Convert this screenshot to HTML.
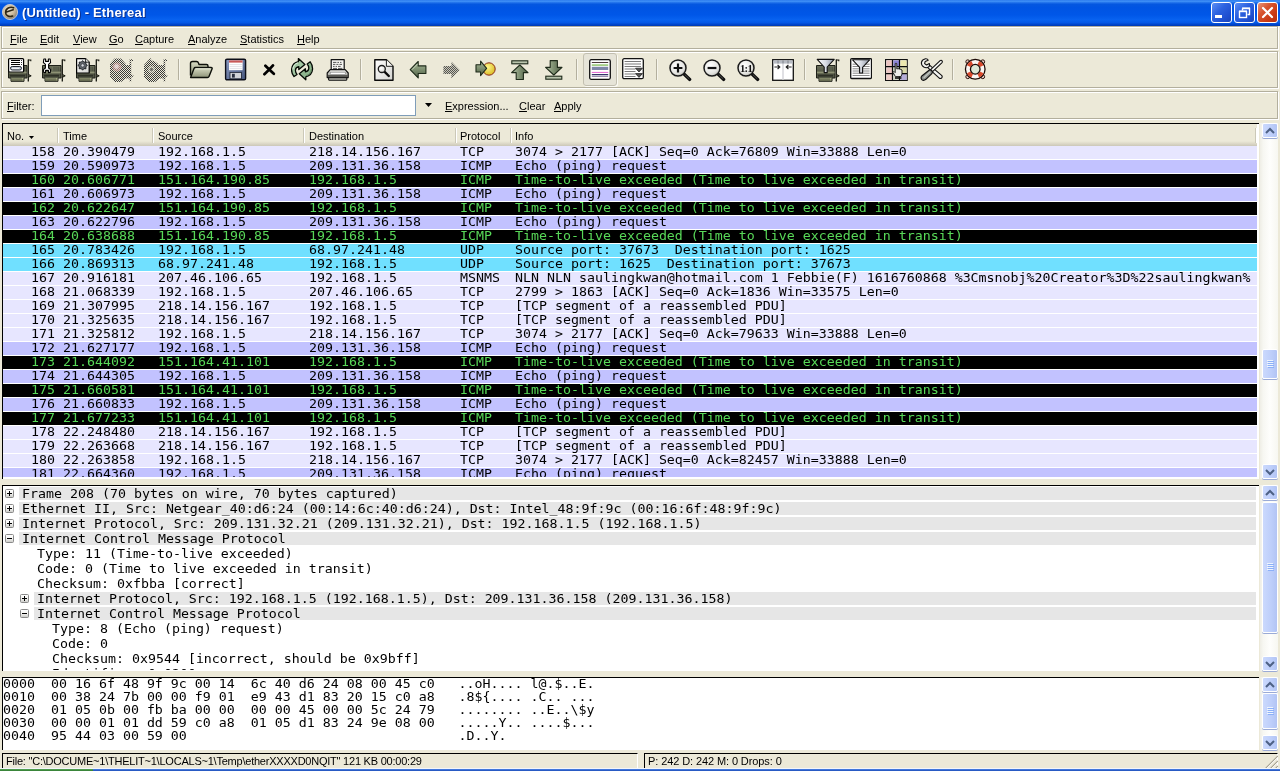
<!DOCTYPE html>
<html lang="en"><head><meta charset="utf-8"><title>(Untitled) - Ethereal</title>
<style>
*{box-sizing:border-box;margin:0;padding:0}
html,body{width:1280px;height:771px;overflow:hidden;background:#ece9d8}
body{position:relative;font:11px "Liberation Sans",sans-serif;color:#000;-webkit-font-smoothing:antialiased}
.abs,.m,.u,.box{position:absolute}
.u{white-space:pre;line-height:14px;height:14px}
.u u{text-decoration:underline}
.m{font-family:"DejaVu Sans Mono","Liberation Mono",monospace;font-size:11.4px;white-space:pre;transform-origin:0 0;transform:scaleX(1.1656);line-height:13px;height:13px;left:0;top:0}
.r{position:absolute;left:3px;width:1254px;height:13px;overflow:hidden}
.r .m{top:0}
.tcp{background:#e7e6ff}.icmp{background:#c2c2ff}.udp{background:#70e0ff}.ttl{background:#000;color:#58d858}
.panel{position:absolute;border:1px solid #b3af9d;box-shadow:1px 1px 0 #fff,inset 1px 1px 0 #fff}
</style></head>
<body>
<div id="win" style="position:absolute;left:0;top:0;width:1280px;height:771px;overflow:hidden;will-change:transform">
<div class="abs" id="titlebar" style="left:0;top:0;width:1280px;height:26px;background:linear-gradient(to bottom,#2f7eee 0%,#3c8df5 6%,#1a6be8 11%,#0457e0 17%,#0054e3 30%,#0057e8 58%,#0862f0 76%,#0558e6 87%,#0046cc 94%,#0038b0 100%)"></div>
<svg class="abs" style="left:1px;top:3px" width="18" height="18" viewBox="0 0 18 18"><defs><linearGradient id="gexp" x1="0" y1="0" x2="0" y2="1"><stop offset="0" stop-color="#fff"/><stop offset="0.5" stop-color="#f4f4f2"/><stop offset="1" stop-color="#c8c8c4"/></linearGradient><radialGradient id="ig" cx="40%" cy="35%" r="65%"><stop offset="0" stop-color="#efe6d4"/><stop offset="0.6" stop-color="#cdbb9c"/><stop offset="1" stop-color="#8c8478"/></radialGradient></defs><circle cx="9" cy="9" r="7.6" fill="url(#ig)" stroke="#c9cdd6" stroke-width="0.9"/><path d="M12.6 4.8 C9 3.4 4.6 5.4 4.6 9.4 C4.6 13 8.4 14.4 11.6 13 M5.4 9 L12.2 6.8" fill="none" stroke="#2e2614" stroke-width="1.6" stroke-linecap="round"/></svg>
<div class="abs" style="left:22px;top:5px;font:bold 13px 'Liberation Sans',sans-serif;letter-spacing:0.18px;color:#fff;text-shadow:1px 1px 0 #0a2f8f;white-space:pre;line-height:16px">(Untitled) - Ethereal</div>
<div class="abs" style="left:1211px;top:2px;width:21px;height:21px;border:1px solid #fff;border-radius:3px;background:linear-gradient(135deg,#5c8ff5 0%,#2c62e0 40%,#1f4fd0 75%,#1a44b8 100%)"></div><div class="abs" style="left:1215px;top:15px;width:7px;height:3px;background:#fff"></div>
<div class="abs" style="left:1234px;top:2px;width:21px;height:21px;border:1px solid #fff;border-radius:3px;background:linear-gradient(135deg,#5c8ff5 0%,#2c62e0 40%,#1f4fd0 75%,#1a44b8 100%)"></div><svg class="abs" style="left:1234px;top:2px" width="21" height="21" viewBox="0 0 21 21"><path d="M8.5 6.5 h7 v6 h-2 M8.5 6.5 v2" fill="none" stroke="#fff" stroke-width="1.4"/><rect x="5.5" y="9.5" width="7" height="6" fill="none" stroke="#fff" stroke-width="1.4"/><path d="M5 9.2 h8 M8 6.2 h8" stroke="#fff" stroke-width="1.2"/></svg>
<div class="abs" style="left:1257px;top:2px;width:21px;height:21px;border:1px solid #fff;border-radius:3px;background:linear-gradient(135deg,#e9967a 0%,#d8552f 35%,#c93a15 70%,#b5300f 100%)"></div><svg class="abs" style="left:1257px;top:2px" width="21" height="21" viewBox="0 0 21 21"><path d="M6 6 L15 15 M15 6 L6 15" stroke="#fff" stroke-width="2.2" stroke-linecap="round"/></svg>
<div class="panel" style="left:1px;top:26px;width:1277px;height:23px"></div>
<div class="u" style="left:10px;top:32px"><u>F</u>ile</div>
<div class="u" style="left:40px;top:32px"><u>E</u>dit</div>
<div class="u" style="left:73px;top:32px"><u>V</u>iew</div>
<div class="u" style="left:109px;top:32px"><u>G</u>o</div>
<div class="u" style="left:135px;top:32px"><u>C</u>apture</div>
<div class="u" style="left:188px;top:32px"><u>A</u>nalyze</div>
<div class="u" style="left:240px;top:32px"><u>S</u>tatistics</div>
<div class="u" style="left:297px;top:32px"><u>H</u>elp</div>
<div class="panel" style="left:1px;top:51px;width:1277px;height:37px"></div>
<svg width="0" height="0" style="position:absolute"><defs>
<pattern id="stip" width="2" height="2" patternUnits="userSpaceOnUse"><rect x="0" y="0" width="1" height="1" fill="#3a3a38"/><rect x="1" y="1" width="1" height="1" fill="#3a3a38"/></pattern>
<linearGradient id="gboard" x1="0" y1="0" x2="0" y2="1"><stop offset="0" stop-color="#6c705c"/><stop offset="0.55" stop-color="#4c5040"/><stop offset="1" stop-color="#5f6350"/></linearGradient>
<linearGradient id="gconn" x1="0" y1="0" x2="0" y2="1"><stop offset="0" stop-color="#b0b48c"/><stop offset="1" stop-color="#6f7358"/></linearGradient>
<linearGradient id="garrow" x1="0" y1="0" x2="0" y2="1"><stop offset="0" stop-color="#a9b89a"/><stop offset="0.5" stop-color="#7d8f70"/><stop offset="1" stop-color="#4d5c44"/></linearGradient>
<linearGradient id="garrowh" x1="0" y1="0" x2="1" y2="0"><stop offset="0" stop-color="#b4c2a6"/><stop offset="0.5" stop-color="#7d8f70"/><stop offset="1" stop-color="#4d5c44"/></linearGradient>
<linearGradient id="gfolder" x1="0" y1="0" x2="0" y2="1"><stop offset="0" stop-color="#d9dcc4"/><stop offset="1" stop-color="#8e9378"/></linearGradient>
<linearGradient id="gfloppy" x1="0" y1="0" x2="1" y2="1"><stop offset="0" stop-color="#8c9cc4"/><stop offset="1" stop-color="#46567c"/></linearGradient>
<radialGradient id="glens" cx="40%" cy="35%" r="70%"><stop offset="0" stop-color="#ffffff"/><stop offset="0.7" stop-color="#e4e4e0"/><stop offset="1" stop-color="#b8b8b2"/></radialGradient>
<linearGradient id="gfunnel" x1="0" y1="0" x2="1" y2="0"><stop offset="0" stop-color="#ffffff"/><stop offset="0.5" stop-color="#d8dce4"/><stop offset="1" stop-color="#8c94a4"/></linearGradient>
<radialGradient id="gyel" cx="40%" cy="35%" r="70%"><stop offset="0" stop-color="#fff68a"/><stop offset="1" stop-color="#d8b820"/></radialGradient>
<linearGradient id="gdoc" x1="0" y1="0" x2="1" y2="1"><stop offset="0" stop-color="#ffffff"/><stop offset="1" stop-color="#d4d4d0"/></linearGradient>
<linearGradient id="gprn" x1="0" y1="0" x2="0" y2="1"><stop offset="0" stop-color="#f2f2ee"/><stop offset="1" stop-color="#8c8c86"/></linearGradient>
<g id="nic">
 <path d="M0.5 7.5 H19 V20 H16 V23.3 H3 V20 H0.5 Z" fill="url(#gboard)" stroke="#1e2018" stroke-width="1"/>
 <rect x="1" y="13.6" width="17.6" height="1.8" fill="#8d9174"/>
 <rect x="3.5" y="20" width="12" height="3" fill="url(#gconn)"/>
 <path d="M5 20 V23 M7 20 V23 M9 20 V23 M11 20 V23 M13 20 V23" stroke="#4a4e3a" stroke-width="0.8"/>
 <rect x="2" y="16.8" width="15" height="1.8" fill="#2e3026"/>
 <rect x="10.5" y="9" width="6" height="4" fill="#7d826a"/>
 <path d="M12 9 V13 M14 9 V13 M16 9 V13" stroke="#30342a" stroke-width="0.9"/>
 <path d="M20.3 1.5 V23.5" stroke="#16170f" stroke-width="1.3"/>
 <path d="M20 2 H22.8 V3.2" stroke="#16170f" stroke-width="1.1" fill="none"/>
 <path d="M20.5 16.5 L23.2 17.8 L21 19" stroke="#16170f" stroke-width="1" fill="#6c705c"/>
</g>
</defs></svg>
<svg class="abs" style="left:8px;top:58px" width="24" height="24" viewBox="0 0 24 24"><use href="#nic"/><rect x="0.6" y="0.6" width="15" height="13.4" fill="#fff" stroke="#000" stroke-width="1.2" rx="1"/><g shape-rendering="crispEdges"><rect x="3" y="2" width="9" height="1" fill="#000"/><rect x="3" y="4" width="9" height="1" fill="#000"/><rect x="3" y="6" width="9" height="1" fill="#000"/><rect x="13" y="2" width="1" height="1" fill="#333"/><rect x="13" y="4" width="1" height="1" fill="#333"/><rect x="13" y="6" width="1" height="1" fill="#333"/></g><rect x="2.5" y="8.5" width="11" height="3.5" rx="1.7" fill="#c4ccd8" stroke="#1c222c" stroke-width="1"/><path d="M4 10.4 H11" stroke="#fff" stroke-width="0.8"/></svg>
<svg class="abs" style="left:42px;top:58px" width="24" height="24" viewBox="0 0 24 24"><use href="#nic"/><path d="M1.8 1 L3.6 1 L3.6 3.4 L6.4 3.4 L6.4 1 L8.2 1 L8.6 4.6 L6.6 6.4 L6.6 10 L8.6 11.6 L8.2 14.6 L6.4 14.6 L6.4 12.4 L3.6 12.4 L3.6 14.6 L1.8 14.6 L1.4 11.6 L3.4 10 L3.4 6.4 L1.4 4.6 Z" fill="#fff" stroke="#000" stroke-width="1.1" stroke-linejoin="round"/></svg>
<svg class="abs" style="left:76px;top:58px" width="24" height="24" viewBox="0 0 24 24"><use href="#nic"/><path d="M0.6 0.6 H9.6 L13.2 4.2 V15 H0.6 Z" fill="url(#gdoc)" stroke="#000" stroke-width="1.2" stroke-linejoin="round"/><path d="M9.6 0.6 V4.2 H13.2" fill="#e8e8e4" stroke="#000" stroke-width="0.8"/><polygon points="11.40 7.40 9.83 8.74 9.99 10.79 7.94 10.63 6.60 12.20 5.26 10.63 3.21 10.79 3.37 8.74 1.80 7.40 3.37 6.06 3.21 4.01 5.26 4.17 6.60 2.60 7.94 4.17 9.99 4.01 9.83 6.06" fill="#5f636a" stroke="#1a1c20" stroke-width="0.9"/><circle cx="6.6" cy="7.4" r="1.6" fill="#d9dce2" stroke="#2a2c30" stroke-width="0.6"/></svg>
<svg class="abs" style="left:110px;top:58px" width="24" height="24" viewBox="0 0 24 24"><g fill="url(#stip)"><path d="M4.6 0.6 H11 L15.8 6 V7 H19.6 V1.2 H23 V3 H21.2 V16 L24 18 L21.2 19.6 V23.4 H19.6 V20.6 H15.8 L11 24 H4.6 L0 19 V5.6 Z"/></g><circle cx="7" cy="9" r="4.5" fill="#e8b0b0" opacity="0.5"/><circle cx="6.5" cy="8.5" r="2.2" fill="#fff" opacity="0.5"/></svg>
<svg class="abs" style="left:144px;top:58px" width="24" height="24" viewBox="0 0 24 24"><g fill="url(#stip)"><path d="M6.4 0 L7.6 2.6 L11 3.4 L14.2 6 V7 H19.6 V1.2 H23 V3 H21.2 V16 L24 18 L21.2 19.6 V23.4 H19.6 V20.6 H15.8 L11 24 H4.6 L0 19 V7 Z"/></g><circle cx="7.5" cy="11.5" r="3.4" fill="#ece9d8" opacity="0.45"/><circle cx="7.5" cy="11.5" r="1.4" fill="#3a3a38" opacity="0.6"/></svg>
<div class="abs" style="left:178px;top:59px;width:1px;height:21px;background:#b4b09e"></div><div class="abs" style="left:179px;top:59px;width:1px;height:21px;background:#f6f5ec"></div>
<svg class="abs" style="left:189px;top:58px" width="24" height="24" viewBox="0 0 24 24"><path d="M1.5 17.5 V5.5 Q1.5 3.5 3.5 3.5 H7.5 Q9 3.5 9.5 5 L10 6.5 H17.5 Q19 6.5 19 8 V9.5" fill="url(#gfolder)" stroke="#0e100a" stroke-width="1.4" stroke-linejoin="round"/><path d="M1.6 19.5 L5 10.5 Q5.4 9.5 6.5 9.5 H22 Q23.6 9.5 23 11 L20 18.5 Q19.6 19.5 18.5 19.5 Z" fill="url(#gfolder)" stroke="#0e100a" stroke-width="1.4" stroke-linejoin="round"/><path d="M6.5 10.8 H21.5" stroke="#f0f2e0" stroke-width="0.9"/></svg>
<svg class="abs" style="left:224px;top:58px" width="24" height="24" viewBox="0 0 24 24"><rect x="1.6" y="1.2" width="20" height="20.6" rx="1.4" fill="url(#gfloppy)" stroke="#0c0e18" stroke-width="1.4"/><rect x="5" y="2.4" width="13.6" height="9.8" fill="#fff"/><rect x="5" y="2.4" width="13.6" height="2.2" fill="#c85858"/><path d="M5.5 6.6 H18 M5.5 8.6 H18 M5.5 10.6 H18" stroke="#d4d4dc" stroke-width="0.7"/><rect x="6" y="14.4" width="11.4" height="6.4" fill="#d2d4d8" stroke="#1a2030" stroke-width="0.8"/><rect x="8" y="15.8" width="2.8" height="3.8" fill="#2a3040"/></svg>
<svg class="abs" style="left:263px;top:64px" width="13" height="13" viewBox="0 0 13 13"><path d="M2.4 1.8 Q6 5.4 10.8 9.8 M10 1.4 Q6.4 5.6 1.4 10.2" fill="none" stroke="#000" stroke-width="2.7" stroke-linecap="round"/></svg>
<svg class="abs" style="left:291px;top:58px" width="24" height="24" viewBox="0 0 24 24"><path d="M7.4 0.6 L13.9 6.6 L7.8 11.6 L7.8 8.6 Q4.6 9 4.4 12.2 Q4.4 14.6 6 16.4 L3 18.6 Q0.4 15.4 0.6 11.4 Q1.2 4.8 7.4 3.6 Z" fill="#a2c6a2" stroke="#050a05" stroke-width="1.3" stroke-linejoin="round"/><path d="M7 4.8 Q2.4 6 1.8 11.4" stroke="#dcefdc" stroke-width="1" fill="none"/><g transform="rotate(180 11.1 11.2)"><path d="M7.4 0.6 L13.9 6.6 L7.8 11.6 L7.8 8.6 Q4.6 9 4.4 12.2 Q4.4 14.6 6 16.4 L3 18.6 Q0.4 15.4 0.6 11.4 Q1.2 4.8 7.4 3.6 Z" fill="#8fb68f" stroke="#050a05" stroke-width="1.3" stroke-linejoin="round"/><path d="M7 4.8 Q2.4 6 1.8 11.4" stroke="#5c845c" stroke-width="1" fill="none"/></g></svg>
<svg class="abs" style="left:326px;top:58px" width="24" height="24" viewBox="0 0 24 24"><path d="M5.2 12 V1.6 H18.2 V12" fill="#f6f6f2" stroke="#111" stroke-width="1.2" stroke-linejoin="round"/><path d="M7 4.4 H10.4 M11.4 4.4 H13 M14 4.4 H15.4 M7 6.4 H9.4 M10.4 6.4 H12.4 M13.4 6.4 H16 M7 8.4 H8.6 M9.6 8.4 H11 M12 8.4 H14.6 M7 10.4 H11 M12 10.4 H16.4" stroke="#555" stroke-width="1"/><path d="M1.2 19.6 V15 L4.2 11.6 H19.2 L22.2 15 V19.6 Z" fill="url(#gprn)" stroke="#111" stroke-width="1.2" stroke-linejoin="round"/><rect x="4.2" y="14.2" width="15" height="2.2" fill="#fff" stroke="#777" stroke-width="0.5"/><path d="M1.8 18 H21.6" stroke="#4a4a44" stroke-width="1.6"/><path d="M2.6 19.8 H20.8 V21.6 Q20.8 22.2 20.2 22.2 H3.2 Q2.6 22.2 2.6 21.6 Z" fill="#b4b4ac" stroke="#111" stroke-width="1.1"/></svg>
<div class="abs" style="left:360px;top:59px;width:1px;height:21px;background:#b4b09e"></div><div class="abs" style="left:361px;top:59px;width:1px;height:21px;background:#f6f5ec"></div>
<svg class="abs" style="left:373px;top:58px" width="24" height="24" viewBox="0 0 24 24"><path d="M1.8 1.7 H13.4 L20 8.3 V22.3 H1.8 Z" fill="url(#gdoc)" stroke="#0a0a0a" stroke-width="1.4" stroke-linejoin="round"/><path d="M13.4 1.7 V8.3 H20" fill="#f6f6f2" stroke="#0a0a0a" stroke-width="0.9" stroke-linejoin="round"/><path d="M11.4 13.6 L15.8 18" stroke="#0a0a0a" stroke-width="2.4" stroke-linecap="round"/><circle cx="8.8" cy="11" r="3.5" fill="url(#glens)" stroke="#1a1a1a" stroke-width="1.3"/></svg>
<svg class="abs" style="left:409px;top:60px" width="18" height="19" viewBox="0 0 18 19"><g transform="translate(0.4,0.7)"><path d="M0.8 9 L8.8 0.8 V5.2 H16.5 V12.8 H8.8 V17.2 Z" fill="url(#garrow)" stroke="#1e2a1a" stroke-width="1.1" stroke-linejoin="round"/><path d="M8 3.4 L2.6 9" stroke="#d8e4cc" stroke-width="0.8"/></g></svg>
<svg class="abs" style="left:443px;top:61px" width="18" height="18" viewBox="0 0 18 18"><path d="M16.5 9 L8.5 0.8 V5 H0.5 V13 H8.5 V17.2 Z" fill="url(#stip)"/><path d="M16.5 9 L8.5 0.8 V5 H0.5 V13 H8.5 V17.2 Z" fill="#8c8c84" opacity="0.35"/></svg>
<svg class="abs" style="left:474px;top:60px" width="22" height="18" viewBox="0 0 22 18"><circle cx="15" cy="9" r="6.2" fill="url(#gyel)" stroke="#8a2a1a" stroke-width="1"/><path d="M12.6 8.4 L6.6 1.2 V4.8 H2 V12 H6.6 V15.6 Z" fill="url(#garrow)" stroke="#1e2a1a" stroke-width="1.1" stroke-linejoin="round"/></svg>
<svg class="abs" style="left:511px;top:60px" width="18" height="20" viewBox="0 0 18 20"><rect x="0.8" y="0.8" width="16" height="3" fill="#b9c4ac" stroke="#1e2a1a" stroke-width="1.1"/><path d="M8.8 5 L17 12.6 H12.4 V19.5 H5.2 V12.6 H0.6 Z" fill="url(#garrowh)" stroke="#1e2a1a" stroke-width="1.1" stroke-linejoin="round"/></svg>
<svg class="abs" style="left:545px;top:60px" width="18" height="20" viewBox="0 0 18 20"><rect x="0.8" y="16.2" width="16" height="3" fill="#b9c4ac" stroke="#1e2a1a" stroke-width="1.1"/><path d="M8.8 15 L17 7.4 H12.4 V0.6 H5.2 V7.4 H0.6 Z" fill="url(#garrowh)" stroke="#1e2a1a" stroke-width="1.1" stroke-linejoin="round"/></svg>
<div class="abs" style="left:576px;top:59px;width:1px;height:21px;background:#b4b09e"></div><div class="abs" style="left:577px;top:59px;width:1px;height:21px;background:#f6f5ec"></div>
<div class="abs" style="left:583px;top:53px;width:34px;height:33px;background:#e6e4d8;border:1px solid #c2bfb0;border-radius:3px;box-shadow:1px 1px 0 #fbfaf4"></div>
<svg class="abs" style="left:589px;top:59px" width="22" height="21" viewBox="0 0 22 21"><rect x="0.7" y="0.7" width="20.6" height="19.6" rx="1.5" fill="#fff" stroke="#111" stroke-width="1.3"/><rect x="2.8" y="3.0" width="16.4" height="1.0" fill="#4a3a3a"/><rect x="2.8" y="5.2" width="16.4" height="1.8" fill="#a4cf86"/><rect x="2.8" y="7.8" width="16.4" height="3.2" fill="#7f88a8"/><rect x="2.8" y="12.9" width="16.4" height="1.1" fill="#e470d6"/><rect x="2.8" y="15.0" width="16.4" height="1.3" fill="#34346a"/><rect x="2.8" y="17.0" width="16.4" height="1.0" fill="#9a8cae"/></svg>
<svg class="abs" style="left:622px;top:58px" width="22" height="22" viewBox="0 0 22 22"><rect x="0.7" y="0.7" width="20.6" height="20" rx="1.5" fill="#fff" stroke="#111" stroke-width="1.3"/><path d="M2.6 3.5 H19.0" stroke="#7a7a7a" stroke-width="1"/><path d="M2.6 6.0 H19.0" stroke="#7a7a7a" stroke-width="1"/><path d="M2.6 8.5 H19.0" stroke="#7a7a7a" stroke-width="1"/><path d="M2.6 11.0 H13.5" stroke="#7a7a7a" stroke-width="1"/><path d="M2.6 13.5 H13.5" stroke="#7a7a7a" stroke-width="1"/><path d="M2.6 16.0 H13.5" stroke="#7a7a7a" stroke-width="1"/><path d="M2.6 18.5 H13.5" stroke="#7a7a7a" stroke-width="1"/><path d="M13.5 10.2 H20.4 L17 14 Z" fill="#555" stroke="#111" stroke-width="0.7"/><path d="M13.5 15.6 H20.4 L17 19.4 Z" fill="#555" stroke="#111" stroke-width="0.7"/></svg>
<div class="abs" style="left:656px;top:59px;width:1px;height:21px;background:#b4b09e"></div><div class="abs" style="left:657px;top:59px;width:1px;height:21px;background:#f6f5ec"></div>
<svg class="abs" style="left:669px;top:59px" width="23" height="23" viewBox="0 0 23 23"><path d="M14.6 14.6 L20.6 20.4" stroke="#0c0c0c" stroke-width="3.4" stroke-linecap="round"/><path d="M16 15.8 L20 19.6" stroke="#5a5a56" stroke-width="0.9" stroke-linecap="round"/><circle cx="9" cy="9" r="8" fill="url(#glens)" stroke="#1a1a1a" stroke-width="1.5"/><path d="M4.6 9 H13.4 M9 4.6 V13.4" stroke="#111" stroke-width="2.2"/></svg>
<svg class="abs" style="left:703px;top:59px" width="23" height="23" viewBox="0 0 23 23"><path d="M14.6 14.6 L20.6 20.4" stroke="#0c0c0c" stroke-width="3.4" stroke-linecap="round"/><path d="M16 15.8 L20 19.6" stroke="#5a5a56" stroke-width="0.9" stroke-linecap="round"/><circle cx="9" cy="9" r="8" fill="url(#glens)" stroke="#1a1a1a" stroke-width="1.5"/><path d="M4.6 9 H13.4" stroke="#111" stroke-width="2.2"/></svg>
<svg class="abs" style="left:737px;top:59px" width="23" height="23" viewBox="0 0 23 23"><path d="M14.6 14.6 L20.6 20.4" stroke="#0c0c0c" stroke-width="3.4" stroke-linecap="round"/><path d="M16 15.8 L20 19.6" stroke="#5a5a56" stroke-width="0.9" stroke-linecap="round"/><circle cx="9" cy="9" r="8" fill="url(#glens)" stroke="#1a1a1a" stroke-width="1.5"/><text x="9" y="12.6" text-anchor="middle" font-family="Liberation Serif, serif" font-weight="bold" font-size="10.5" letter-spacing="-0.7" fill="#111">1:1</text></svg>
<svg class="abs" style="left:772px;top:59px" width="22" height="22" viewBox="0 0 22 22"><rect x="0.7" y="0.7" width="20.6" height="20.6" fill="#fff" stroke="#111" stroke-width="1.3"/><rect x="1.4" y="1.4" width="19.2" height="3.2" fill="#b8bcc4"/><path d="M6 1.4 V4.6 M11 1.4 V4.6 M16 1.4 V4.6" stroke="#70747c" stroke-width="0.8"/><path d="M11 5 V20.5" stroke="#e0e0e4" stroke-width="2"/><path d="M2.4 8 H7.6 M5.6 6 L7.8 8 L5.6 10" stroke="#222" stroke-width="1.1" fill="none"/><path d="M19.6 8 H14.4 M16.4 6 L14.2 8 L16.4 10" stroke="#222" stroke-width="1.1" fill="none"/></svg>
<div class="abs" style="left:804px;top:59px;width:1px;height:21px;background:#b4b09e"></div><div class="abs" style="left:805px;top:59px;width:1px;height:21px;background:#f6f5ec"></div>
<svg class="abs" style="left:816px;top:58px" width="24" height="24" viewBox="0 0 24 24"><use href="#nic"/><path d="M1.2 1.4 H18.2 L11.2 9 V14.6 H8.2 V9 Z" fill="url(#gfunnel)" stroke="#111" stroke-width="1.1" stroke-linejoin="round"/></svg>
<svg class="abs" style="left:850px;top:58px" width="22" height="22" viewBox="0 0 22 22"><rect x="0.7" y="0.7" width="20.8" height="19.8" rx="1" fill="#fff" stroke="#111" stroke-width="1.3"/><path d="M2.6 6.2 H19.6" stroke="#7c7c7c" stroke-width="0.9"/><path d="M2.6 8.5 H19.6" stroke="#7c7c7c" stroke-width="0.9"/><path d="M2.6 10.8 H19.6" stroke="#7c7c7c" stroke-width="0.9"/><path d="M2.6 13.0 H19.6" stroke="#7c7c7c" stroke-width="0.9"/><path d="M2.6 15.2 H19.6" stroke="#7c7c7c" stroke-width="0.9"/><path d="M2.6 17.5 H19.6" stroke="#7c7c7c" stroke-width="0.9"/><path d="M2.6 1.8 H19.6 L12.6 9.4 V15 H9.6 V9.4 Z" fill="url(#gfunnel)" stroke="#111" stroke-width="1.1" stroke-linejoin="round"/></svg>
<svg class="abs" style="left:885px;top:59px" width="23" height="22" viewBox="0 0 23 22"><rect x="0.6" y="0.6" width="21.6" height="21" fill="#fff" stroke="#111" stroke-width="1.2"/><rect x="1.4" y="1.4" width="6.2" height="6" fill="#ecc4c0"/><rect x="8.4" y="1.4" width="6.2" height="6" fill="#8c84d8"/><rect x="15.4" y="1.4" width="6.2" height="6" fill="#ece8b0"/><rect x="1.4" y="8.2" width="6.2" height="6" fill="#ecc8c4"/><rect x="8.4" y="8.2" width="6.2" height="6" fill="#c8d8c0"/><rect x="15.4" y="8.2" width="6.2" height="6" fill="#d8d8a8"/><rect x="1.4" y="15.0" width="6.2" height="6" fill="#eeccc6"/><rect x="8.4" y="15.0" width="6.2" height="6" fill="#d4d8c8"/><rect x="15.4" y="15.0" width="6.2" height="6" fill="#b4acd8"/><path d="M7.5 1 V21.2 M14.5 1 V21.2 M1 7.5 H22 M1 14.5 H22" stroke="#0a0a0a" stroke-width="1.25"/><path d="M10.2 4.6 Q11 3.6 11.8 4.6 V10 L13 9.6 L14.4 10 L15.8 10.4 L17 11 V15 L16 17.6 H10.4 L8 13.4 Q8.2 12.2 9.4 12.8 L10.2 13.6 Z" fill="#ecece8" stroke="#111" stroke-width="0.9" stroke-linejoin="round"/><rect x="10" y="18.2" width="6.4" height="1.6" fill="#111"/></svg>
<svg class="abs" style="left:920px;top:58px" width="23" height="24" viewBox="0 0 23 24"><path d="M8.6 6.4 L21.6 17.4 Q22.8 18.8 21.6 20 Q20.2 21 19 19.8 L6.4 8.4 Z" fill="#f4f4f0" stroke="#111" stroke-width="1.1" stroke-linejoin="round"/><path d="M5.4 0.8 Q7.6 0.6 8.2 2.2 L5.2 3.4 L4.6 5.6 L6.6 7 L9.4 5.6 Q10.2 7.6 8.6 9 Q6.4 10.4 3.8 9 Q1.2 7.4 1.4 4.6 Q1.8 1.8 5.4 0.8 Z" fill="#f4f4f0" stroke="#111" stroke-width="1.1" stroke-linejoin="round"/><path d="M20.4 2.4 Q21.6 2 22.2 3 Q22.6 4 21.8 4.8 L12.6 13.6 L10.6 11.6 Z" fill="#f4f4f0" stroke="#111" stroke-width="1.1" stroke-linejoin="round"/><path d="M9.4 12 Q11.4 11.6 12.2 13.4 Q12.6 14.8 11.6 15.8 L5.6 21.6 Q3.6 23 1.8 21.6 Q0.4 19.8 1.8 18 Z" fill="#8e928e" stroke="#111" stroke-width="1.2" stroke-linejoin="round"/><path d="M4 19.6 L9.6 14.2" stroke="#c4c8c4" stroke-width="1.2" stroke-linecap="round"/></svg>
<div class="abs" style="left:952px;top:59px;width:1px;height:21px;background:#b4b09e"></div><div class="abs" style="left:953px;top:59px;width:1px;height:21px;background:#f6f5ec"></div>
<svg class="abs" style="left:964px;top:58px" width="23" height="23" viewBox="0 0 23 23"><circle cx="18.75" cy="18.75" r="1.9" fill="#f0d8d0" stroke="#2a0e08" stroke-width="1"/><circle cx="3.75" cy="18.75" r="1.9" fill="#f0d8d0" stroke="#2a0e08" stroke-width="1"/><circle cx="3.75" cy="3.75" r="1.9" fill="#f0d8d0" stroke="#2a0e08" stroke-width="1"/><circle cx="18.75" cy="3.75" r="1.9" fill="#f0d8d0" stroke="#2a0e08" stroke-width="1"/><circle cx="11.25" cy="11.25" r="9.8" fill="#fbf6f2" stroke="#1c0a06" stroke-width="1.3"/><path d="M19.59 15.14 A9.2 9.2 0 0 1 15.14 19.59 L13.45 15.96 A5.2 5.2 0 0 0 15.96 13.45 Z" fill="#d9492c"/><path d="M7.36 19.59 A9.2 9.2 0 0 1 2.91 15.14 L6.54 13.45 A5.2 5.2 0 0 0 9.05 15.96 Z" fill="#d9492c"/><path d="M2.91 7.36 A9.2 9.2 0 0 1 7.36 2.91 L9.05 6.54 A5.2 5.2 0 0 0 6.54 9.05 Z" fill="#d9492c"/><path d="M15.14 2.91 A9.2 9.2 0 0 1 19.59 7.36 L15.96 9.05 A5.2 5.2 0 0 0 13.45 6.54 Z" fill="#d9492c"/><circle cx="11.25" cy="11.25" r="4.8" fill="#dde8d6" stroke="#1c0a06" stroke-width="1.3"/></svg>
<div class="panel" style="left:1px;top:91px;width:1277px;height:28px"></div>
<div class="u" style="left:7px;top:99px"><u>F</u>ilter:</div>
<div class="abs" style="left:41px;top:95px;width:375px;height:21px;background:#fff;border:1px solid #7f9db9"></div>
<svg class="abs" style="left:425px;top:103px" width="7" height="4" viewBox="0 0 7 4"><path d="M0 0 H7 L3.5 4 Z" fill="#000"/></svg>
<div class="u" style="left:445px;top:99px"><u>E</u>xpression...</div>
<div class="u" style="left:519px;top:99px"><u>C</u>lear</div>
<div class="u" style="left:554px;top:99px"><u>A</u>pply</div>
<div class="abs" style="left:2px;top:123px;width:1257px;height:356px;background:#fff;border-top:1px solid #000;border-left:1px solid #000"></div>
<div class="abs" style="left:3px;top:124px;width:1254px;height:22px;background:linear-gradient(to bottom,#ece9d8 0,#ece9d8 17px,#e0dccb 19px,#cbc7b8 22px)"></div>
<div class="u" style="left:7px;top:129px">No.</div>
<div class="u" style="left:63px;top:129px">Time</div>
<div class="u" style="left:158px;top:129px">Source</div>
<div class="u" style="left:309px;top:129px">Destination</div>
<div class="u" style="left:460px;top:129px">Protocol</div>
<div class="u" style="left:515px;top:129px">Info</div>
<div class="abs" style="left:57px;top:128px;width:1px;height:15px;background:#cbc8b8"></div><div class="abs" style="left:58px;top:128px;width:1px;height:15px;background:#fff"></div>
<div class="abs" style="left:152px;top:128px;width:1px;height:15px;background:#cbc8b8"></div><div class="abs" style="left:153px;top:128px;width:1px;height:15px;background:#fff"></div>
<div class="abs" style="left:303px;top:128px;width:1px;height:15px;background:#cbc8b8"></div><div class="abs" style="left:304px;top:128px;width:1px;height:15px;background:#fff"></div>
<div class="abs" style="left:455px;top:128px;width:1px;height:15px;background:#cbc8b8"></div><div class="abs" style="left:456px;top:128px;width:1px;height:15px;background:#fff"></div>
<div class="abs" style="left:510px;top:128px;width:1px;height:15px;background:#cbc8b8"></div><div class="abs" style="left:511px;top:128px;width:1px;height:15px;background:#fff"></div>
<div class="abs" style="left:1255px;top:128px;width:1px;height:15px;background:#cbc8b8"></div><div class="abs" style="left:1256px;top:128px;width:1px;height:15px;background:#fff"></div>
<svg class="abs" style="left:29px;top:136px" width="5" height="3" viewBox="0 0 5 3"><path d="M0 0 H5 L2.5 3 Z" fill="#000"/></svg>
<div class="r tcp" style="top:146px;height:13px"><span class="m" style="left:28px">158</span><span class="m" style="left:60px">20.390479</span><span class="m" style="left:155px">192.168.1.5</span><span class="m" style="left:306px">218.14.156.167</span><span class="m" style="left:457px">TCP</span><span class="m" style="left:512px">3074 &gt; 2177 [ACK] Seq=0 Ack=76809 Win=33888 Len=0</span></div>
<div class="r icmp" style="top:160px;height:13px"><span class="m" style="left:28px">159</span><span class="m" style="left:60px">20.590973</span><span class="m" style="left:155px">192.168.1.5</span><span class="m" style="left:306px">209.131.36.158</span><span class="m" style="left:457px">ICMP</span><span class="m" style="left:512px">Echo (ping) request</span></div>
<div class="r ttl" style="top:174px;height:13px"><span class="m" style="left:28px">160</span><span class="m" style="left:60px">20.606771</span><span class="m" style="left:155px">151.164.190.85</span><span class="m" style="left:306px">192.168.1.5</span><span class="m" style="left:457px">ICMP</span><span class="m" style="left:512px">Time-to-live exceeded (Time to live exceeded in transit)</span></div>
<div class="r icmp" style="top:188px;height:13px"><span class="m" style="left:28px">161</span><span class="m" style="left:60px">20.606973</span><span class="m" style="left:155px">192.168.1.5</span><span class="m" style="left:306px">209.131.36.158</span><span class="m" style="left:457px">ICMP</span><span class="m" style="left:512px">Echo (ping) request</span></div>
<div class="r ttl" style="top:202px;height:13px"><span class="m" style="left:28px">162</span><span class="m" style="left:60px">20.622647</span><span class="m" style="left:155px">151.164.190.85</span><span class="m" style="left:306px">192.168.1.5</span><span class="m" style="left:457px">ICMP</span><span class="m" style="left:512px">Time-to-live exceeded (Time to live exceeded in transit)</span></div>
<div class="r icmp" style="top:216px;height:13px"><span class="m" style="left:28px">163</span><span class="m" style="left:60px">20.622796</span><span class="m" style="left:155px">192.168.1.5</span><span class="m" style="left:306px">209.131.36.158</span><span class="m" style="left:457px">ICMP</span><span class="m" style="left:512px">Echo (ping) request</span></div>
<div class="r ttl" style="top:230px;height:13px"><span class="m" style="left:28px">164</span><span class="m" style="left:60px">20.638688</span><span class="m" style="left:155px">151.164.190.85</span><span class="m" style="left:306px">192.168.1.5</span><span class="m" style="left:457px">ICMP</span><span class="m" style="left:512px">Time-to-live exceeded (Time to live exceeded in transit)</span></div>
<div class="r udp" style="top:244px;height:13px"><span class="m" style="left:28px">165</span><span class="m" style="left:60px">20.783426</span><span class="m" style="left:155px">192.168.1.5</span><span class="m" style="left:306px">68.97.241.48</span><span class="m" style="left:457px">UDP</span><span class="m" style="left:512px">Source port: 37673  Destination port: 1625</span></div>
<div class="r udp" style="top:258px;height:13px"><span class="m" style="left:28px">166</span><span class="m" style="left:60px">20.869313</span><span class="m" style="left:155px">68.97.241.48</span><span class="m" style="left:306px">192.168.1.5</span><span class="m" style="left:457px">UDP</span><span class="m" style="left:512px">Source port: 1625  Destination port: 37673</span></div>
<div class="r tcp" style="top:272px;height:13px"><span class="m" style="left:28px">167</span><span class="m" style="left:60px">20.916181</span><span class="m" style="left:155px">207.46.106.65</span><span class="m" style="left:306px">192.168.1.5</span><span class="m" style="left:457px">MSNMS</span><span class="m" style="left:512px">NLN NLN saulingkwan@hotmail.com 1 Febbie(F) 1616760868 %3Cmsnobj%20Creator%3D%22saulingkwan%</span></div>
<div class="r tcp" style="top:286px;height:13px"><span class="m" style="left:28px">168</span><span class="m" style="left:60px">21.068339</span><span class="m" style="left:155px">192.168.1.5</span><span class="m" style="left:306px">207.46.106.65</span><span class="m" style="left:457px">TCP</span><span class="m" style="left:512px">2799 &gt; 1863 [ACK] Seq=0 Ack=1836 Win=33575 Len=0</span></div>
<div class="r tcp" style="top:300px;height:13px"><span class="m" style="left:28px">169</span><span class="m" style="left:60px">21.307995</span><span class="m" style="left:155px">218.14.156.167</span><span class="m" style="left:306px">192.168.1.5</span><span class="m" style="left:457px">TCP</span><span class="m" style="left:512px">[TCP segment of a reassembled PDU]</span></div>
<div class="r tcp" style="top:314px;height:13px"><span class="m" style="left:28px">170</span><span class="m" style="left:60px">21.325635</span><span class="m" style="left:155px">218.14.156.167</span><span class="m" style="left:306px">192.168.1.5</span><span class="m" style="left:457px">TCP</span><span class="m" style="left:512px">[TCP segment of a reassembled PDU]</span></div>
<div class="r tcp" style="top:328px;height:13px"><span class="m" style="left:28px">171</span><span class="m" style="left:60px">21.325812</span><span class="m" style="left:155px">192.168.1.5</span><span class="m" style="left:306px">218.14.156.167</span><span class="m" style="left:457px">TCP</span><span class="m" style="left:512px">3074 &gt; 2177 [ACK] Seq=0 Ack=79633 Win=33888 Len=0</span></div>
<div class="r icmp" style="top:342px;height:13px"><span class="m" style="left:28px">172</span><span class="m" style="left:60px">21.627177</span><span class="m" style="left:155px">192.168.1.5</span><span class="m" style="left:306px">209.131.36.158</span><span class="m" style="left:457px">ICMP</span><span class="m" style="left:512px">Echo (ping) request</span></div>
<div class="r ttl" style="top:356px;height:13px"><span class="m" style="left:28px">173</span><span class="m" style="left:60px">21.644092</span><span class="m" style="left:155px">151.164.41.101</span><span class="m" style="left:306px">192.168.1.5</span><span class="m" style="left:457px">ICMP</span><span class="m" style="left:512px">Time-to-live exceeded (Time to live exceeded in transit)</span></div>
<div class="r icmp" style="top:370px;height:13px"><span class="m" style="left:28px">174</span><span class="m" style="left:60px">21.644305</span><span class="m" style="left:155px">192.168.1.5</span><span class="m" style="left:306px">209.131.36.158</span><span class="m" style="left:457px">ICMP</span><span class="m" style="left:512px">Echo (ping) request</span></div>
<div class="r ttl" style="top:384px;height:13px"><span class="m" style="left:28px">175</span><span class="m" style="left:60px">21.660581</span><span class="m" style="left:155px">151.164.41.101</span><span class="m" style="left:306px">192.168.1.5</span><span class="m" style="left:457px">ICMP</span><span class="m" style="left:512px">Time-to-live exceeded (Time to live exceeded in transit)</span></div>
<div class="r icmp" style="top:398px;height:13px"><span class="m" style="left:28px">176</span><span class="m" style="left:60px">21.660833</span><span class="m" style="left:155px">192.168.1.5</span><span class="m" style="left:306px">209.131.36.158</span><span class="m" style="left:457px">ICMP</span><span class="m" style="left:512px">Echo (ping) request</span></div>
<div class="r ttl" style="top:412px;height:13px"><span class="m" style="left:28px">177</span><span class="m" style="left:60px">21.677233</span><span class="m" style="left:155px">151.164.41.101</span><span class="m" style="left:306px">192.168.1.5</span><span class="m" style="left:457px">ICMP</span><span class="m" style="left:512px">Time-to-live exceeded (Time to live exceeded in transit)</span></div>
<div class="r tcp" style="top:426px;height:13px"><span class="m" style="left:28px">178</span><span class="m" style="left:60px">22.248480</span><span class="m" style="left:155px">218.14.156.167</span><span class="m" style="left:306px">192.168.1.5</span><span class="m" style="left:457px">TCP</span><span class="m" style="left:512px">[TCP segment of a reassembled PDU]</span></div>
<div class="r tcp" style="top:440px;height:13px"><span class="m" style="left:28px">179</span><span class="m" style="left:60px">22.263668</span><span class="m" style="left:155px">218.14.156.167</span><span class="m" style="left:306px">192.168.1.5</span><span class="m" style="left:457px">TCP</span><span class="m" style="left:512px">[TCP segment of a reassembled PDU]</span></div>
<div class="r tcp" style="top:454px;height:13px"><span class="m" style="left:28px">180</span><span class="m" style="left:60px">22.263858</span><span class="m" style="left:155px">192.168.1.5</span><span class="m" style="left:306px">218.14.156.167</span><span class="m" style="left:457px">TCP</span><span class="m" style="left:512px">3074 &gt; 2177 [ACK] Seq=0 Ack=82457 Win=33888 Len=0</span></div>
<div class="r icmp" style="top:468px;height:9px"><span class="m" style="left:28px">181</span><span class="m" style="left:60px">22.664360</span><span class="m" style="left:155px">192.168.1.5</span><span class="m" style="left:306px">209.131.36.158</span><span class="m" style="left:457px">ICMP</span><span class="m" style="left:512px">Echo (ping) request</span></div>
<div class="abs" style="left:1260px;top:123px;width:18px;height:356px;background:linear-gradient(to right,#efeee6 0,#f7f7f2 18%,#fefefc 55%,#f7f7f1 100%)"></div><div class="abs" style="left:1262px;top:123px;width:16px;height:15px;border:1px solid #fff;border-radius:2px;background:linear-gradient(to right,#cbd9fd,#bdcefa 60%,#b2c4f4);box-shadow:0 1px 0 #9aaad6"></div><svg class="abs" style="left:1265px;top:127px" width="10" height="8" viewBox="0 0 10 8"><path d="M1 6 L5 2 L9 6" fill="none" stroke="#4d6185" stroke-width="2"/></svg><div class="abs" style="left:1262px;top:464px;width:16px;height:15px;border:1px solid #fff;border-radius:2px;background:linear-gradient(to right,#cbd9fd,#bdcefa 60%,#b2c4f4);box-shadow:0 1px 0 #9aaad6"></div><svg class="abs" style="left:1265px;top:468px" width="10" height="8" viewBox="0 0 10 8"><path d="M1 2 L5 6 L9 2" fill="none" stroke="#4d6185" stroke-width="2"/></svg><div class="abs" style="left:1262px;top:349px;width:16px;height:30px;border:1px solid #fff;border-radius:2px;background:linear-gradient(to right,#cbd9fd,#bdcefa 60%,#b2c4f4);box-shadow:0 1px 0 #9aaad6"></div><div class="abs" style="left:1267px;top:360px;width:6px;height:1px;background:#eef4fe"></div><div class="abs" style="left:1268px;top:361px;width:6px;height:1px;background:#8cb0f8"></div><div class="abs" style="left:1267px;top:362px;width:6px;height:1px;background:#eef4fe"></div><div class="abs" style="left:1268px;top:363px;width:6px;height:1px;background:#8cb0f8"></div><div class="abs" style="left:1267px;top:364px;width:6px;height:1px;background:#eef4fe"></div><div class="abs" style="left:1268px;top:365px;width:6px;height:1px;background:#8cb0f8"></div><div class="abs" style="left:1267px;top:366px;width:6px;height:1px;background:#eef4fe"></div><div class="abs" style="left:1268px;top:367px;width:6px;height:1px;background:#8cb0f8"></div>
<div class="abs" style="left:2px;top:485px;width:1257px;height:186px;background:#fff;border-top:1px solid #000;border-left:1px solid #000"></div>
<div class="abs" style="left:3px;top:487px;width:1254px;height:15px;overflow:hidden"><div class="abs" style="left:16px;top:0;width:1237px;height:13px;background:#e6e6e6"></div><svg class="abs" style="left:2px;top:2px" width="9" height="9" viewBox="0 0 9 9"><rect x="0.5" y="0.5" width="8" height="8" rx="1" fill="url(#gexp)" stroke="#8a8a8a"/><path d="M2 4.5 H7 M4.5 2 V7" stroke="#000" stroke-width="1" fill="none"/></svg><span class="m" style="left:19px;top:1px">Frame 208 (70 bytes on wire, 70 bytes captured)</span></div>
<div class="abs" style="left:3px;top:502px;width:1254px;height:15px;overflow:hidden"><div class="abs" style="left:16px;top:0;width:1237px;height:13px;background:#e6e6e6"></div><svg class="abs" style="left:2px;top:2px" width="9" height="9" viewBox="0 0 9 9"><rect x="0.5" y="0.5" width="8" height="8" rx="1" fill="url(#gexp)" stroke="#8a8a8a"/><path d="M2 4.5 H7 M4.5 2 V7" stroke="#000" stroke-width="1" fill="none"/></svg><span class="m" style="left:19px;top:1px">Ethernet II, Src: Netgear_40:d6:24 (00:14:6c:40:d6:24), Dst: Intel_48:9f:9c (00:16:6f:48:9f:9c)</span></div>
<div class="abs" style="left:3px;top:517px;width:1254px;height:15px;overflow:hidden"><div class="abs" style="left:16px;top:0;width:1237px;height:13px;background:#e6e6e6"></div><svg class="abs" style="left:2px;top:2px" width="9" height="9" viewBox="0 0 9 9"><rect x="0.5" y="0.5" width="8" height="8" rx="1" fill="url(#gexp)" stroke="#8a8a8a"/><path d="M2 4.5 H7 M4.5 2 V7" stroke="#000" stroke-width="1" fill="none"/></svg><span class="m" style="left:19px;top:1px">Internet Protocol, Src: 209.131.32.21 (209.131.32.21), Dst: 192.168.1.5 (192.168.1.5)</span></div>
<div class="abs" style="left:3px;top:532px;width:1254px;height:15px;overflow:hidden"><div class="abs" style="left:16px;top:0;width:1237px;height:13px;background:#e6e6e6"></div><svg class="abs" style="left:2px;top:2px" width="9" height="9" viewBox="0 0 9 9"><rect x="0.5" y="0.5" width="8" height="8" rx="1" fill="url(#gexp)" stroke="#8a8a8a"/><path d="M2 4.5 H7" stroke="#000" stroke-width="1" fill="none"/></svg><span class="m" style="left:19px;top:1px">Internet Control Message Protocol</span></div>
<div class="abs" style="left:3px;top:547px;width:1254px;height:15px;overflow:hidden"><span class="m" style="left:34px;top:1px">Type: 11 (Time-to-live exceeded)</span></div>
<div class="abs" style="left:3px;top:562px;width:1254px;height:15px;overflow:hidden"><span class="m" style="left:34px;top:1px">Code: 0 (Time to live exceeded in transit)</span></div>
<div class="abs" style="left:3px;top:577px;width:1254px;height:15px;overflow:hidden"><span class="m" style="left:34px;top:1px">Checksum: 0xfbba [correct]</span></div>
<div class="abs" style="left:3px;top:592px;width:1254px;height:15px;overflow:hidden"><div class="abs" style="left:31px;top:0;width:1222px;height:13px;background:#e6e6e6"></div><svg class="abs" style="left:17px;top:2px" width="9" height="9" viewBox="0 0 9 9"><rect x="0.5" y="0.5" width="8" height="8" rx="1" fill="url(#gexp)" stroke="#8a8a8a"/><path d="M2 4.5 H7 M4.5 2 V7" stroke="#000" stroke-width="1" fill="none"/></svg><span class="m" style="left:34px;top:1px">Internet Protocol, Src: 192.168.1.5 (192.168.1.5), Dst: 209.131.36.158 (209.131.36.158)</span></div>
<div class="abs" style="left:3px;top:607px;width:1254px;height:15px;overflow:hidden"><div class="abs" style="left:31px;top:0;width:1222px;height:13px;background:#e6e6e6"></div><svg class="abs" style="left:17px;top:2px" width="9" height="9" viewBox="0 0 9 9"><rect x="0.5" y="0.5" width="8" height="8" rx="1" fill="url(#gexp)" stroke="#8a8a8a"/><path d="M2 4.5 H7" stroke="#000" stroke-width="1" fill="none"/></svg><span class="m" style="left:34px;top:1px">Internet Control Message Protocol</span></div>
<div class="abs" style="left:3px;top:622px;width:1254px;height:15px;overflow:hidden"><span class="m" style="left:49px;top:1px">Type: 8 (Echo (ping) request)</span></div>
<div class="abs" style="left:3px;top:637px;width:1254px;height:15px;overflow:hidden"><span class="m" style="left:49px;top:1px">Code: 0</span></div>
<div class="abs" style="left:3px;top:652px;width:1254px;height:15px;overflow:hidden"><span class="m" style="left:49px;top:1px">Checksum: 0x9544 [incorrect, should be 0x9bff]</span></div>
<div class="abs" style="left:3px;top:667px;width:1254px;height:3px;overflow:hidden"><span class="m" style="left:49px;top:1px">Identifier: 0x0200</span></div>
<div class="abs" style="left:1260px;top:485px;width:18px;height:186px;background:linear-gradient(to right,#efeee6 0,#f7f7f2 18%,#fefefc 55%,#f7f7f1 100%)"></div><div class="abs" style="left:1262px;top:485px;width:16px;height:15px;border:1px solid #fff;border-radius:2px;background:linear-gradient(to right,#cbd9fd,#bdcefa 60%,#b2c4f4);box-shadow:0 1px 0 #9aaad6"></div><svg class="abs" style="left:1265px;top:489px" width="10" height="8" viewBox="0 0 10 8"><path d="M1 6 L5 2 L9 6" fill="none" stroke="#4d6185" stroke-width="2"/></svg><div class="abs" style="left:1262px;top:656px;width:16px;height:15px;border:1px solid #fff;border-radius:2px;background:linear-gradient(to right,#cbd9fd,#bdcefa 60%,#b2c4f4);box-shadow:0 1px 0 #9aaad6"></div><svg class="abs" style="left:1265px;top:660px" width="10" height="8" viewBox="0 0 10 8"><path d="M1 2 L5 6 L9 2" fill="none" stroke="#4d6185" stroke-width="2"/></svg><div class="abs" style="left:1262px;top:502px;width:16px;height:131px;border:1px solid #fff;border-radius:2px;background:linear-gradient(to right,#cbd9fd,#bdcefa 60%,#b2c4f4);box-shadow:0 1px 0 #9aaad6"></div><div class="abs" style="left:1267px;top:563px;width:6px;height:1px;background:#eef4fe"></div><div class="abs" style="left:1268px;top:564px;width:6px;height:1px;background:#8cb0f8"></div><div class="abs" style="left:1267px;top:565px;width:6px;height:1px;background:#eef4fe"></div><div class="abs" style="left:1268px;top:566px;width:6px;height:1px;background:#8cb0f8"></div><div class="abs" style="left:1267px;top:567px;width:6px;height:1px;background:#eef4fe"></div><div class="abs" style="left:1268px;top:568px;width:6px;height:1px;background:#8cb0f8"></div><div class="abs" style="left:1267px;top:569px;width:6px;height:1px;background:#eef4fe"></div><div class="abs" style="left:1268px;top:570px;width:6px;height:1px;background:#8cb0f8"></div>
<div class="abs" style="left:2px;top:677px;width:1257px;height:73px;background:#fff;border-top:1px solid #000;border-left:1px solid #000"></div>
<div class="abs" style="left:3px;top:678px;width:1250px;height:13px"><span class="m">0000  00 16 6f 48 9f 9c 00 14  6c 40 d6 24 08 00 45 c0   ..oH.... l@.$..E.</span></div>
<div class="abs" style="left:3px;top:691px;width:1250px;height:13px"><span class="m">0010  00 38 24 7b 00 00 f9 01  e9 43 d1 83 20 15 c0 a8   .8${.... .C.. ...</span></div>
<div class="abs" style="left:3px;top:704px;width:1250px;height:13px"><span class="m">0020  01 05 0b 00 fb ba 00 00  00 00 45 00 00 5c 24 79   ........ ..E..\$y</span></div>
<div class="abs" style="left:3px;top:717px;width:1250px;height:13px"><span class="m">0030  00 00 01 01 dd 59 c0 a8  01 05 d1 83 24 9e 08 00   .....Y.. ....$...</span></div>
<div class="abs" style="left:3px;top:730px;width:1250px;height:13px"><span class="m">0040  95 44 03 00 59 00                                  .D..Y.</span></div>
<div class="abs" style="left:1260px;top:677px;width:18px;height:73px;background:linear-gradient(to right,#efeee6 0,#f7f7f2 18%,#fefefc 55%,#f7f7f1 100%)"></div><div class="abs" style="left:1262px;top:677px;width:16px;height:15px;border:1px solid #fff;border-radius:2px;background:linear-gradient(to right,#cbd9fd,#bdcefa 60%,#b2c4f4);box-shadow:0 1px 0 #9aaad6"></div><svg class="abs" style="left:1265px;top:681px" width="10" height="8" viewBox="0 0 10 8"><path d="M1 6 L5 2 L9 6" fill="none" stroke="#4d6185" stroke-width="2"/></svg><div class="abs" style="left:1262px;top:735px;width:16px;height:15px;border:1px solid #fff;border-radius:2px;background:linear-gradient(to right,#cbd9fd,#bdcefa 60%,#b2c4f4);box-shadow:0 1px 0 #9aaad6"></div><svg class="abs" style="left:1265px;top:739px" width="10" height="8" viewBox="0 0 10 8"><path d="M1 2 L5 6 L9 2" fill="none" stroke="#4d6185" stroke-width="2"/></svg><div class="abs" style="left:1262px;top:693px;width:16px;height:36px;border:1px solid #fff;border-radius:2px;background:linear-gradient(to right,#cbd9fd,#bdcefa 60%,#b2c4f4);box-shadow:0 1px 0 #9aaad6"></div><div class="abs" style="left:1267px;top:707px;width:6px;height:1px;background:#eef4fe"></div><div class="abs" style="left:1268px;top:708px;width:6px;height:1px;background:#8cb0f8"></div><div class="abs" style="left:1267px;top:709px;width:6px;height:1px;background:#eef4fe"></div><div class="abs" style="left:1268px;top:710px;width:6px;height:1px;background:#8cb0f8"></div><div class="abs" style="left:1267px;top:711px;width:6px;height:1px;background:#eef4fe"></div><div class="abs" style="left:1268px;top:712px;width:6px;height:1px;background:#8cb0f8"></div><div class="abs" style="left:1267px;top:713px;width:6px;height:1px;background:#eef4fe"></div><div class="abs" style="left:1268px;top:714px;width:6px;height:1px;background:#8cb0f8"></div>
<div class="abs" style="left:2px;top:753px;width:636px;height:16px;border:1px solid;border-color:#000 #fff #fff #000"></div>
<div class="u" style="left:6px;top:754px;letter-spacing:-0.226px">File: "C:\DOCUME~1\THELIT~1\LOCALS~1\Temp\etherXXXXD0NQIT" 121 KB 00:00:29</div>
<div class="abs" style="left:644px;top:753px;width:634px;height:16px;border:1px solid;border-color:#000 #fff #fff #000"></div>
<div class="u" style="left:648px;top:754px;letter-spacing:-0.1px">P: 242 D: 242 M: 0 Drops: 0</div>
<svg class="abs" style="left:1264px;top:755px" width="14" height="14" viewBox="0 0 14 14"><path d="M1 14 L14 1 M6 14 L14 6 M11 14 L14 11" stroke="#a8a494" stroke-width="1.2"/><path d="M2.2 14 L14 2.2 M7.2 14 L14 7.2 M12.2 14 L14 12.2" stroke="#fff" stroke-width="0.9"/></svg>
<div class="abs" style="left:0;top:768px;width:1280px;height:1px;background:#f4f6fb"></div><div class="abs" style="left:0;top:769px;width:1280px;height:2px;background:linear-gradient(to bottom,#4f86e8,#1c4cb8)"></div><div class="abs" style="left:0;top:769px;width:93px;height:2px;background:linear-gradient(to bottom,#5aa85a,#2f7a2f)"></div>
</div>
</body></html>
